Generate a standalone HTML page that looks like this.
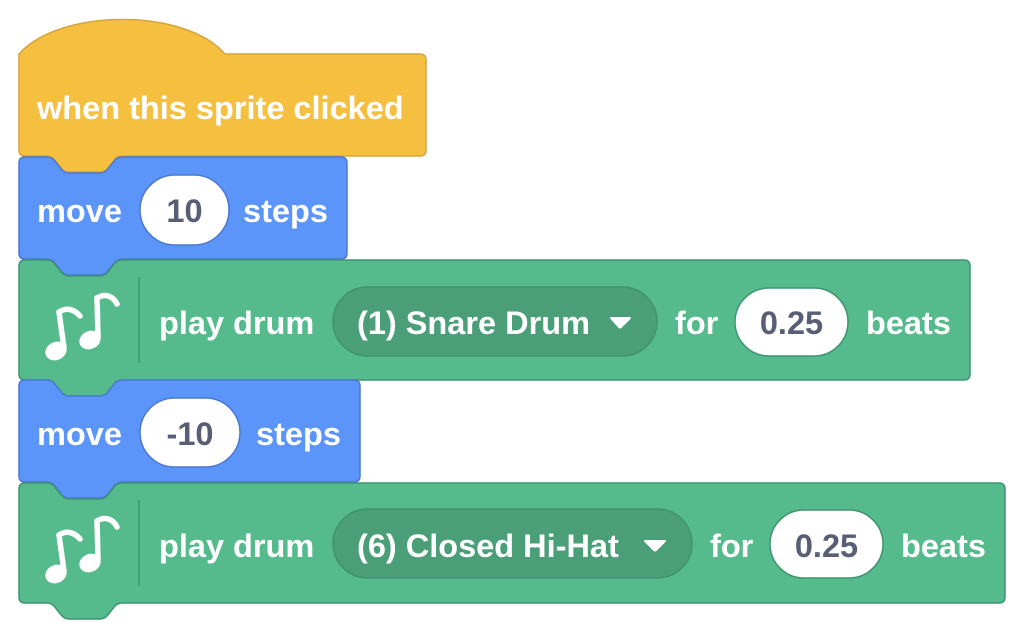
<!DOCTYPE html>
<html><head><meta charset="utf-8"><style>
html,body{margin:0;padding:0;background:#fff;}
svg{display:block}
text{font-family:"Liberation Sans",Helvetica,Arial,sans-serif;font-weight:bold;font-size:32.5px;fill:#fff}
.in{fill:#575E75;text-anchor:middle}
</style></head><body>
<svg width="1025" height="639" viewBox="0 0 1025 639" xmlns="http://www.w3.org/2000/svg">
<!-- hat -->
<path d="M19,54 C60,8 185,8 225,54 L420,54 Q426,54 426,60 L426,150 Q426,156 420,156 L122,156 C119,156 117,157 115,159 L107,169 C105,171 103,172 100,172 L69,172 C66,172 64,171 62,169 L54,159 C52,157 50,156 47,156 L25,156 Q19,156 19,150 Z" fill="#F5C040" stroke="#D6A43A" stroke-width="1.5"/>
<text x="37" y="119">when this sprite clicked</text>

<!-- move 1 -->
<path d="M19,163 Q19,157 25,157 L47,157 C50,157 52,158 54,160 L62,170 C64,172 66,173 69,173 L100,173 C103,173 105,172 107,170 L115,160 C117,158 119,157 122,157 L341,157 Q347,157 347,163 L347,253 Q347,259 341,259 L122,259 C119,259 117,260 115,262 L107,272 C105,274 103,275 100,275 L69,275 C66,275 64,274 62,272 L54,262 C52,260 50,259 47,259 L25,259 Q19,259 19,253 Z" fill="#5C95F9" stroke="#4A78D0" stroke-width="1.5"/>
<text x="37" y="222">move</text>
<rect x="140" y="175" width="89" height="70" rx="35" fill="#fff" stroke="#4A78D0" stroke-width="1.5"/>
<text class="in" x="184.5" y="222">10</text>
<text x="243" y="222">steps</text>

<!-- green 1 -->
<path d="M19,266 Q19,260 25,260 L47,260 C50,260 52,261 54,263 L62,273 C64,275 66,276 69,276 L100,276 C103,276 105,275 107,273 L115,263 C117,261 119,260 122,260 L964,260 Q970,260 970,266 L970,374 Q970,380 964,380 L122,380 C119,380 117,381 115,383 L107,393 C105,395 103,396 100,396 L69,396 C66,396 64,395 62,393 L54,383 C52,381 50,380 47,380 L25,380 Q19,380 19,374 Z" fill="#55BA8C" stroke="#3F9470" stroke-width="1.5"/>
<line x1="139" y1="277" x2="139" y2="363" stroke="#3F9470" stroke-width="1.5"/>
<g id="notes" fill="#fff" stroke="#fff">
<ellipse cx="56" cy="351" rx="11" ry="9" transform="rotate(-25 56 351)" stroke="none"/>
<path d="M64,348 L59,312" stroke-width="5.5" fill="none" stroke-linecap="round"/>
<path d="M59,312 C66,307 74,309 80,316" stroke-width="5.5" fill="none" stroke-linecap="round"/>
<ellipse cx="90" cy="340" rx="11" ry="9" transform="rotate(-25 90 340)" stroke="none"/>
<path d="M98,337 L97,298" stroke-width="5.5" fill="none" stroke-linecap="round"/>
<path d="M97,298 C105,293 113,296 117,304" stroke-width="5.5" fill="none" stroke-linecap="round"/>
</g>
<text x="159" y="334">play drum</text>
<rect x="333" y="287" width="324" height="69" rx="34.5" fill="#4A9E78" stroke="#3F9470" stroke-width="1.5"/>
<text x="357" y="334">(1) Snare Drum</text>
<path d="M611,318 L630,318 L621,327 Q620,328 619,327 Z" fill="#fff" stroke="#fff" stroke-width="2" stroke-linejoin="round"/>
<text x="675" y="334">for</text>
<rect x="735" y="288" width="113" height="68" rx="34" fill="#fff" stroke="#3F9470" stroke-width="1.5"/>
<text class="in" x="791.5" y="334">0.25</text>
<text x="866" y="334">beats</text>

<!-- move 2 -->
<path d="M19,386 Q19,380 25,380 L47,380 C50,380 52,381 54,383 L62,393 C64,395 66,396 69,396 L100,396 C103,396 105,395 107,393 L115,383 C117,381 119,380 122,380 L354,380 Q360,380 360,386 L360,476 Q360,482 354,482 L122,482 C119,482 117,483 115,485 L107,495 C105,497 103,498 100,498 L69,498 C66,498 64,497 62,495 L54,485 C52,483 50,482 47,482 L25,482 Q19,482 19,476 Z" fill="#5C95F9" stroke="#4A78D0" stroke-width="1.5"/>
<text x="37" y="445">move</text>
<rect x="140" y="398" width="100" height="69" rx="34.5" fill="#fff" stroke="#4A78D0" stroke-width="1.5"/>
<text class="in" x="190" y="445">-10</text>
<text x="256" y="445">steps</text>

<!-- green 2 -->
<path d="M19,489 Q19,483 25,483 L47,483 C50,483 52,484 54,486 L62,496 C64,498 66,499 69,499 L100,499 C103,499 105,498 107,496 L115,486 C117,484 119,483 122,483 L999,483 Q1005,483 1005,489 L1005,597 Q1005,603 999,603 L122,603 C119,603 117,604 115,606 L107,616 C105,618 103,619 100,619 L69,619 C66,619 64,618 62,616 L54,606 C52,604 50,603 47,603 L25,603 Q19,603 19,597 Z" fill="#55BA8C" stroke="#3F9470" stroke-width="1.5"/>
<line x1="139" y1="500" x2="139" y2="586" stroke="#3F9470" stroke-width="1.5"/>
<use href="#notes" transform="translate(0,223)"/>
<text x="159" y="557">play drum</text>
<rect x="333" y="509" width="359" height="69" rx="34.5" fill="#4A9E78" stroke="#3F9470" stroke-width="1.5"/>
<text x="357" y="557">(6) Closed Hi-Hat</text>
<path d="M645,541 L665,541 L656,550 Q655,551 654,550 Z" fill="#fff" stroke="#fff" stroke-width="2" stroke-linejoin="round"/>
<text x="710" y="557">for</text>
<rect x="770" y="510" width="113" height="68" rx="34" fill="#fff" stroke="#3F9470" stroke-width="1.5"/>
<text class="in" x="826.5" y="557">0.25</text>
<text x="901" y="557">beats</text>
</svg>
</body></html>
